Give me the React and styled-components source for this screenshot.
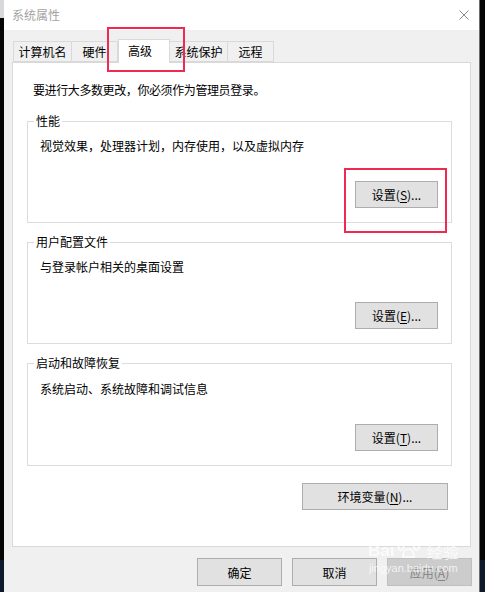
import React from 'react';
import styled, { createGlobalStyle } from 'styled-components';

const GlobalStyle = createGlobalStyle`
  html, body {
    margin: 0;
    padding: 0;
    background: #000;
  }
  body {
    font-family: "Noto Sans CJK SC", "Noto Sans", sans-serif;
    font-size: 12px;
    color: #000;
  }
`;

const Screen = styled.div`
  display: flex;
  width: 485px;
  height: 592px;
  overflow: hidden;
  position: relative;
`;

const Edge = styled.div`
  width: ${({ w }) => w}px;
  display: flex;
  flex-direction: column;
  background: #050505;
  border-left: ${({ line }) => (line ? '1px solid #6d6d6d' : 'none')};
`;

const EdgePart = styled.div`
  height: ${({ h }) => h}px;
  flex: ${({ grow }) => (grow ? 1 : 'none')};
  background: ${({ c }) => c};
`;

const Window = styled.div`
  width: 476px;
  display: flex;
  flex-direction: column;
  background: #f0f0f0;
`;

const TitleBar = styled.div`
  height: 30px;
  background: #fff;
  display: flex;
  align-items: center;
  justify-content: space-between;
  padding: 0 10px 0 8px;
`;

const TitleText = styled.span`
  color: #a3a3a3;
  font-size: 12px;
  line-height: 16px;
`;

const Body = styled.div`
  flex: 1;
  display: flex;
  flex-direction: column;
  padding: 9px 8px 0 8px;
`;

const TabRow = styled.div`
  display: flex;
  align-items: flex-end;
  padding-left: 1px;
  height: 23px;
`;

const Tab = styled.div`
  width: ${({ w }) => w}px;
  height: ${({ active }) => (active ? 24 : 21)}px;
  margin-bottom: ${({ active }) => (active ? -1 : 0)}px;
  background: ${({ active }) => (active ? '#fff' : '#f0f0f0')};
  border: 1px solid #d9d9d9;
  border-bottom: ${({ active }) => (active ? 'none' : '1px solid #d9d9d9')};
  border-left: ${({ first, active }) => (first || active ? '1px solid #d9d9d9' : 'none')};
  box-sizing: border-box;
  display: flex;
  align-items: center;
  justify-content: center;
  padding: 0 ${({ active }) => (active ? 8 : 0)}px ${({ active }) => (active ? 3 : 0)}px 0;
  position: relative;
  z-index: ${({ active }) => (active ? 2 : 1)};
  font-size: 12px;
`;

const Panel = styled.div`
  height: 485px;
  box-sizing: border-box;
  background: #fff;
  border: 1px solid #d9d9d9;
  display: flex;
  flex-direction: column;
`;

const Intro = styled.div`
  margin: 19px 0 0 20px;
  line-height: 16px;
  letter-spacing: -0.4px;
`;

const Group = styled.div`
  position: relative;
  margin: ${({ top }) => top}px 0 0 14px;
  width: 425px;
  height: ${({ h }) => h}px;
  box-sizing: border-box;
  border: 1px solid #dcdcdc;
  display: flex;
  flex-direction: column;
`;

const Legend = styled.span`
  position: absolute;
  top: -9px;
  left: 6px;
  padding: 0 2px;
  background: #fff;
  line-height: 16px;
`;

const Desc = styled.div`
  padding: ${({ top }) => top}px 0 0 12px;
  line-height: 16px;
`;

const Button = styled.button`
  width: ${({ w }) => w}px;
  height: ${({ h }) => h || 27}px;
  box-sizing: border-box;
  background: ${({ disabled }) => (disabled ? '#cccccc' : '#e1e1e1')};
  border: 1px solid ${({ disabled }) => (disabled ? '#bfbfbf' : '#adadad')};
  color: ${({ disabled }) => (disabled ? '#838383' : '#000')};
  font-family: inherit;
  font-size: 12px;
  padding: 0;
  display: flex;
  align-items: center;
  justify-content: center;
`;

const GroupButton = styled(Button)`
  align-self: flex-end;
  margin: auto 13px 14px 0;
`;

const EnvButton = styled(Button)`
  align-self: flex-end;
  margin: 17px 22px 0 0;
`;

const Key = styled.span`
  text-decoration: underline;
  text-underline-offset: 2px;
`;

const Footer = styled.div`
  display: flex;
  justify-content: flex-end;
  gap: 10px;
  padding: 11px 0 0 0;
  margin-right: -1px;
`;

const Highlight = styled.div`
  position: absolute;
  left: ${({ x }) => x}px;
  top: ${({ y }) => y}px;
  width: ${({ w }) => w}px;
  height: ${({ h }) => h}px;
  box-sizing: border-box;
  border: 2px solid #ee2a52;
  z-index: 5;
`;

const Watermark = styled.div`
  position: absolute;
  left: 368px;
  top: 538px;
  display: flex;
  flex-direction: column;
  align-items: center;
  color: rgba(255, 255, 255, 0.75);
  z-index: 6;
  pointer-events: none;
`;

const MarkTop = styled.div`
  display: flex;
  align-items: flex-end;
  font-family: "Liberation Sans", Arial, sans-serif;
  font-weight: bold;
  font-size: 17px;
  line-height: 18px;
  gap: 1px;
`;

const MarkCn = styled.span`
  font-family: "Noto Sans CJK SC", sans-serif;
  font-weight: 400;
  font-size: 16px;
  margin-left: 4px;
`;

const MarkUrl = styled.div`
  font-family: "Liberation Sans", Arial, sans-serif;
  font-size: 11px;
  line-height: 13px;
  margin-top: 2px;
`;

const Paw = () => (
  <svg width="26" height="22" viewBox="0 0 26 22">
    <g fill="none" stroke="rgba(255,255,255,0.85)" strokeWidth="1.6">
      <ellipse cx="6" cy="9" rx="2.5" ry="3" />
      <ellipse cx="11" cy="4" rx="2.5" ry="3" />
      <ellipse cx="17" cy="4" rx="2.5" ry="3" />
      <ellipse cx="21.5" cy="9" rx="2.5" ry="3" />
      <path d="M8 19 C8 13 11 11 13.5 11 C16 11 19 13 19 19 Z" />
    </g>
  </svg>
);

const CloseIcon = () => (
  <svg width="10" height="10" viewBox="0 0 10 10">
    <path d="M0.5 0.5 L9.5 9.5 M9.5 0.5 L0.5 9.5" stroke="#8a8a8a" strokeWidth="1" />
  </svg>
);

const tabs = [
  { label: '计算机名', w: 59 },
  { label: '硬件', w: 46 },
  { label: '高级', w: 52, active: true },
  { label: '系统保护', w: 58 },
  { label: '远程', w: 46 },
];

const groups = [
  { title: '性能', desc: '视觉效果，处理器计划，内存使用，以及虚拟内存', key: 'S', top: 23, h: 102, descTop: 16 },
  { title: '用户配置文件', desc: '与登录帐户相关的桌面设置', key: 'E', top: 19, h: 102, descTop: 16 },
  { title: '启动和故障恢复', desc: '系统启动、系统故障和调试信息', key: 'T', top: 19, h: 103, descTop: 17 },
];

export default function App() {
  return (
    <Screen>
      <GlobalStyle />
      <Edge w={4}>
        <EdgePart h={18} c="#d8d8d8" />
        <EdgePart grow c="#050505" />
        <EdgePart h={32} c="#0c1a2c" />
      </Edge>
      <Window>
        <TitleBar>
          <TitleText>系统属性</TitleText>
          <CloseIcon />
        </TitleBar>
        <Body>
          <TabRow>
            {tabs.map((t, i) => (
              <Tab key={t.label} w={t.w} active={t.active} first={i === 0}>
                {t.label}
              </Tab>
            ))}
          </TabRow>
          <Panel>
            <Intro>要进行大多数更改，你必须作为管理员登录。</Intro>
            {groups.map((g) => (
              <Group key={g.title} top={g.top} h={g.h}>
                <Legend>{g.title}</Legend>
                <Desc top={g.descTop}>{g.desc}</Desc>
                <GroupButton w={83}>
                  设置(<Key>{g.key}</Key>)...
                </GroupButton>
              </Group>
            ))}
            <EnvButton w={146}>
              环境变量(<Key>N</Key>)...
            </EnvButton>
          </Panel>
          <Footer>
            <Button w={85} h={28}>确定</Button>
            <Button w={85} h={28}>取消</Button>
            <Button w={85} h={28} disabled>
              应用(<Key>A</Key>)
            </Button>
          </Footer>
        </Body>
      </Window>
      <Edge w={5} line>
        <EdgePart grow c="#050505" />
        <EdgePart h={32} c="#0c1a2c" />
      </Edge>
      <Highlight x={107} y={27} w={78} h={45} />
      <Highlight x={344} y={168} w={103} h={65} />
      <Watermark>
        <MarkTop>
          <span>Bai</span>
          <Paw />
          <MarkCn>经验</MarkCn>
        </MarkTop>
        <MarkUrl>jingyan.baidu.com</MarkUrl>
      </Watermark>
    </Screen>
  );
}
